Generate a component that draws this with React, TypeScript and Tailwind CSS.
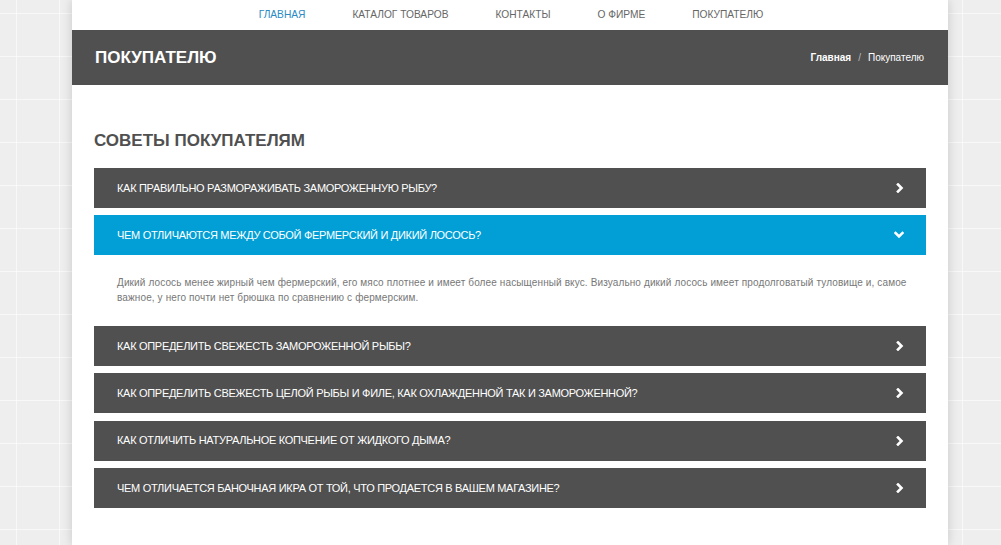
import React from "react";

const items = [
  { q: "Как правильно размораживать замороженную рыбу?", open: false },
  { q: "Чем отличаются между собой фермерский и дикий лосось?", open: true },
  { q: "Как определить свежесть замороженной рыбы?", open: false },
  { q: "Как определить свежесть целой рыбы и филе, как охлажденной так и замороженной?", open: false },
  { q: "Как отличить натуральное копчение от жидкого дыма?", open: false },
  { q: "Чем отличается баночная икра от той, что продается в вашем магазине?", open: false },
];

function ChevronRight() {
  return (
    <svg width="8" height="10" viewBox="0 0 8 10" className="block">
      <polyline points="2,1.5 5.5,5 2,8.5" fill="none" stroke="#fff" strokeWidth="2.6" strokeLinecap="square" />
    </svg>
  );
}

function ChevronDown() {
  return (
    <svg width="10" height="8" viewBox="0 0 10 8" className="block">
      <polyline points="1.5,2 5,5.5 8.5,2" fill="none" stroke="#fff" strokeWidth="2.6" strokeLinecap="square" />
    </svg>
  );
}

export default function App() {
  const navItems = ["Главная", "Каталог товаров", "Контакты", "О фирме", "Покупателю"];
  return (
    <div
      className="min-h-[545px] w-[1001px] overflow-hidden bg-[#eeeeee] bg-[linear-gradient(to_right,rgba(255,255,255,0.6)_1px,transparent_1px),linear-gradient(to_bottom,rgba(255,255,255,0.6)_1px,transparent_1px)] bg-[size:43px_43px] bg-[position:16px_13px] pl-[72px]"
      style={{ fontFamily: '"Liberation Sans", Arial, sans-serif' }}
    >
      <div className="flex min-h-[545px] w-[876px] flex-col bg-white shadow-[0_0_10px_rgba(0,0,0,0.16)]">
        <nav className="flex h-[30px] items-center justify-center gap-[47px] pl-[2px] text-[10.2px] uppercase text-[#666]">
          {navItems.map((n, i) => (
            <span key={n} className={i === 0 ? "text-[#2a8ac4]" : ""}>
              {n}
            </span>
          ))}
        </nav>
        <div className="flex h-[55px] items-center justify-between bg-[#505050] pl-[23px] pr-[24px]">
          <h1 className="text-[17px] font-bold uppercase text-white">Покупателю</h1>
          <div className="flex items-center gap-[7px] text-[10px] text-white">
            <span className="font-bold">Главная</span>
            <span className="text-[#bbb]">/</span>
            <span>Покупателю</span>
          </div>
        </div>
        <div className="px-[22px] pt-[46px]">
          <h2 className="text-[17px] font-bold uppercase leading-[20px] text-[#505050]">Советы покупателям</h2>
          <div className="mt-[17px] flex flex-col">
            {items.map((it, i) => (
              <div key={i} className={i > 0 ? "mt-[7.4px]" : ""}>
                <div
                  className={`flex h-[40px] items-center justify-between pl-[23px] pr-[22px] text-[11px] uppercase tracking-[-0.3px] text-white ${
                    it.open ? "bg-[#019fd6]" : "bg-[#505050]"
                  }`}
                >
                  <span>{it.q}</span>
                  {it.open ? <ChevronDown /> : <ChevronRight />}
                </div>
                {it.open && (
                  <p className="pb-[13px] pl-[23px] pr-[12px] pt-[20px] text-[10px] leading-[15px] tracking-[0.12px] text-[#777]">
                    Дикий лосось менее жирный чем фермерский, его мясо плотнее и имеет более насыщенный вкус. Визуально дикий лосось имеет продолговатый туловище и, самое важное, у него почти нет брюшка по сравнению с фермерским.
                  </p>
                )}
              </div>
            ))}
          </div>
        </div>
      </div>
    </div>
  );
}
